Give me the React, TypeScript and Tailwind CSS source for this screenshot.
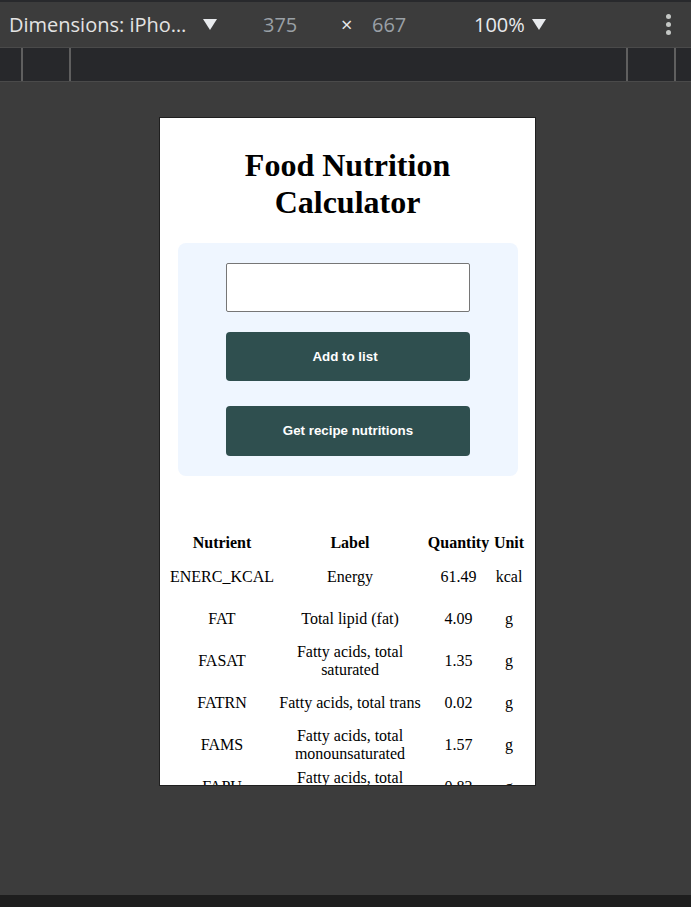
import React from "react";

type Row = { code: string; label: string; qty: string; unit: string };

const rows: Row[] = [
  { code: "ENERC_KCAL", label: "Energy", qty: "61.49", unit: "kcal" },
  { code: "FAT", label: "Total lipid (fat)", qty: "4.09", unit: "g" },
  { code: "FASAT", label: "Fatty acids, total saturated", qty: "1.35", unit: "g" },
  { code: "FATRN", label: "Fatty acids, total trans", qty: "0.02", unit: "g" },
  { code: "FAMS", label: "Fatty acids, total monounsaturated", qty: "1.57", unit: "g" },
  { code: "FAPU", label: "Fatty acids, total polyunsaturated", qty: "0.82", unit: "g" },
  { code: "CHOCDF", label: "Carbohydrate, by difference", qty: "4.66", unit: "g" },
  { code: "FIBTG", label: "Fiber, total dietary", qty: "0", unit: "g" },
];

function Caret() {
  return (
    <svg width="14" height="12" viewBox="0 0 14 12" className="block">
      <polygon points="0,0 14,0 7,11" fill="#e8eaed" />
    </svg>
  );
}

function Toolbar() {
  return (
    <div className="flex flex-col">
      <div className="h-[2px] bg-[#28292c]" />
      <div className="flex h-[45px] items-center bg-[#3c3c3c] font-['Open_Sans',sans-serif] text-[20px]">
        {/* device selector */}
        <span className="ml-[9px] w-[194px] whitespace-nowrap text-[#e3e3e3]">Dimensions: iPho…</span>
        <Caret />
        <span className="ml-[46px] w-[78px] text-[#9aa0a6]">375</span>
        <span className="w-[31px] text-[#e8eaed]">×</span>
        <span className="w-[102px] text-[#9aa0a6]">667</span>
        <span className="w-[58px] text-[#e8eaed]">100%</span>
        <Caret />
        <div className="ml-[120px] flex flex-col gap-[3px]">
          <span className="h-[5px] w-[5px] rounded-full bg-[#c4c7c5]" />
          <span className="h-[5px] w-[5px] rounded-full bg-[#c4c7c5]" />
          <span className="h-[5px] w-[5px] rounded-full bg-[#c4c7c5]" />
        </div>
      </div>
      <div className="h-px bg-[#4a4a4a]" />
      <div className="flex h-[33px] bg-[#27282b]">
        <span className="ml-[21px] w-[2px] bg-[#5f5f5f]" />
        <span className="ml-[46px] w-[2px] bg-[#5f5f5f]" />
        <span className="ml-[555px] w-[2px] bg-[#5f5f5f]" />
        <span className="ml-[46px] w-[2px] bg-[#5f5f5f]" />
      </div>
      <div className="h-px bg-[#4a4a4a]" />
    </div>
  );
}

function NutritionPage() {
  return (
    <div className="px-[8px] pt-[8px] font-['Liberation_Serif',serif] text-[16px] text-black">
      <h1 className="mt-[21px] mb-[22px] text-center text-[32px] font-bold leading-[37px]">
        Food Nutrition
        <br />
        Calculator
      </h1>

      <div className="ml-[10px] flex w-[340px] flex-col items-center rounded-[8px] bg-[#eff6ff] py-[20px] font-['Liberation_Sans',Arial,sans-serif]">
        <input
          type="text"
          className="h-[49px] w-[244px] rounded-[2px] border border-[#767676] bg-white px-2 outline-none"
        />
        <button className="mt-[20px] h-[49px] w-[244px] rounded-[4px] bg-[#2f4f4f] pr-[6px] text-[13.33px] font-bold text-white">
          Add to list
        </button>
        <button className="mt-[25px] h-[50px] w-[244px] rounded-[4px] bg-[#2f4f4f] text-[13.33px] font-bold text-white">
          Get recipe nutritions
        </button>
      </div>

      <table className="mt-[53px] w-[359px] table-fixed border-separate border-spacing-[2px] text-center">
        <colgroup>
          <col className="w-[104px]" />
          <col className="w-[148px]" />
          <col className="w-[65px]" />
          <col className="w-[32px]" />
        </colgroup>
        <thead>
          <tr className="h-[20px] font-bold">
            <th className="p-0 whitespace-nowrap">Nutrient</th>
            <th className="p-0">Label</th>
            <th className="p-0 whitespace-nowrap">Quantity</th>
            <th className="p-0">Unit</th>
          </tr>
        </thead>
        <tbody>
          {rows.map((r) => (
            <tr key={r.code} className="h-[40px]">
              <td className="p-0 whitespace-nowrap">{r.code}</td>
              <td className="p-0 leading-[18px]">{r.label}</td>
              <td className="p-0">{r.qty}</td>
              <td className="p-0">{r.unit}</td>
            </tr>
          ))}
        </tbody>
      </table>
    </div>
  );
}

export default function App() {
  return (
    <div className="flex h-[907px] w-[691px] flex-col overflow-hidden bg-[#3c3c3c]">
      <Toolbar />
      <div className="flex-1 pt-[35px]">
        <div className="ml-[159px] h-[669px] w-[377px] overflow-hidden border border-[#1f1f1f] bg-white">
          <NutritionPage />
        </div>
      </div>
      <div className="h-[12px] bg-[#1e1e1e]" />
    </div>
  );
}
